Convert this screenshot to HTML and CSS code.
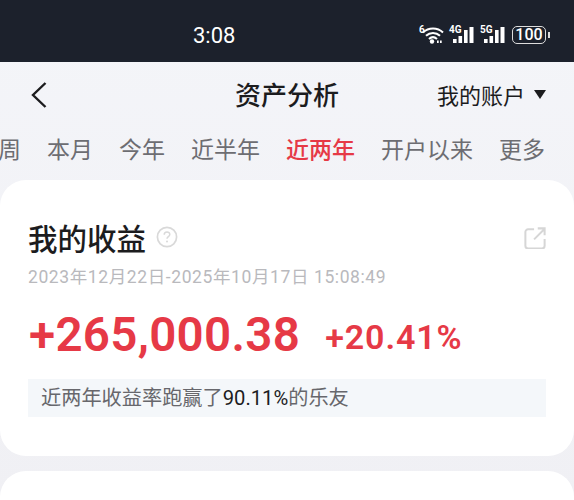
FILE: index.html
```html
<!DOCTYPE html>
<html lang="zh-CN">
<head>
    <meta charset="UTF-8">
    <meta name="viewport" content="width=device-width, initial-scale=1.0">
    <title>资产分析</title>
    <link rel="stylesheet" href="styles.css">
</head>
<body>
    <div class="status-bar">
        <span class="clock">3:08</span>
        <div class="status-icons">
            <span class="net-wifi">
                <span class="net-label">6</span>
                <svg width="22" height="18" viewBox="0 0 22 18">
                    <path d="M1 6.5C6.5 1.2 15.5 1.2 21 6.5M4 9.8C8 6 14 6 18 9.8M7 13C9.4 10.8 12.6 10.8 15 13" fill="none" stroke="#fff" stroke-width="2"/>
                    <circle cx="10" cy="15.5" r="2.2" fill="#fff"/>
                    <rect x="15" y="14.5" width="1.7" height="2.5" fill="#fff"/>
                    <rect x="18" y="14.5" width="1.7" height="2.5" fill="#fff"/>
                </svg>
            </span>
            <span class="net-cell">
                <span class="net-label">4G</span>
                <svg width="26" height="18" viewBox="0 0 26 18">
                    <rect x="4" y="13" width="3.6" height="4" fill="#fff"/>
                    <rect x="9.5" y="10" width="3.6" height="7" fill="#fff"/>
                    <rect x="15" y="4" width="3.6" height="13" fill="#fff"/>
                    <rect x="20.5" y="1" width="4" height="16" fill="#fff"/>
                </svg>
            </span>
            <span class="net-cell">
                <span class="net-label">5G</span>
                <svg width="26" height="18" viewBox="0 0 26 18">
                    <rect x="4" y="13" width="3.6" height="4" fill="#fff"/>
                    <rect x="9.5" y="10" width="3.6" height="7" fill="#fff"/>
                    <rect x="15" y="4" width="3.6" height="13" fill="#fff"/>
                    <rect x="20.5" y="1" width="4" height="16" fill="#fff"/>
                </svg>
            </span>
            <span class="battery">100</span>
            <span class="battery-tip"></span>
        </div>
    </div>

    <header class="nav">
        <svg class="back" width="18" height="28" viewBox="0 0 18 28">
            <path d="M15.5 2L3 14l12.5 12" fill="none" stroke="#1c1c1e" stroke-width="2.4"/>
        </svg>
        <h1>资产分析</h1>
        <div class="account">我的账户<span class="caret"></span></div>
    </header>

    <nav class="tabs">
        <span class="tab">周</span>
        <span class="tab">本月</span>
        <span class="tab">今年</span>
        <span class="tab">近半年</span>
        <span class="tab active">近两年</span>
        <span class="tab">开户以来</span>
        <span class="tab">更多</span>
    </nav>

    <main class="cards">
        <section class="card">
            <div class="card-head">
                <h2>我的收益</h2>
                <svg class="help" width="22" height="22" viewBox="0 0 22 22">
                    <circle cx="11" cy="11" r="9.6" fill="none" stroke="#d9d9d9" stroke-width="1.7"/>
                    <path d="M8.2 8.8c0-3.6 5.6-3.6 5.6-.2 0 2-2.8 2.2-2.8 4.2" fill="none" stroke="#d9d9d9" stroke-width="1.5"/>
                    <circle cx="11" cy="15.6" r="1" fill="#d9d9d9"/>
                </svg>
                <svg class="share" width="22" height="22" viewBox="0 0 24 24">
                    <path d="M11 2.5H4.5a3 3 0 0 0-3 3v15a3 3 0 0 0 3 3h15a3 3 0 0 0 3-3V13" fill="none" stroke="#d6d6d6" stroke-width="2.2"/>
                    <path d="M11 13.5L21.5 3M15 1.5h7.5V9" fill="none" stroke="#d6d6d6" stroke-width="2.2"/>
                </svg>
            </div>
            <p class="date">2023年12月22日-2025年10月17日 15:08:49</p>
            <div class="profit">
                <span class="amount">+265,000.38</span>
                <span class="rate">+20.41%</span>
            </div>
            <p class="beat">近两年收益率跑赢了<b>90.11%</b>的乐友</p>
        </section>
        <section class="card-next"></section>
    </main>
</body>
</html>
```

FILE: styles.css
```css
:root {
    --red: #e63946;
    --dark: #1c212c;
}

body, h1, h2, p { margin: 0; }
html, body { height: 500px; overflow: hidden; }
body {
    background: linear-gradient(to bottom, #f4f5f9, #f0f0f4);
    font-family: "Noto Sans CJK SC", "Noto Sans", sans-serif;
    color: #1c1c1e;
}

.status-bar {
    height: 62px;
    background: var(--dark);
    color: #fff;
    display: flex;
    align-items: center;
    padding-left: 193px;
    position: relative;
}

.clock {
    font-family: "Roboto", sans-serif;
    font-size: 22px;
    line-height: 26px;
    margin-top: 9px;
}

.status-icons {
    position: absolute;
    left: 419px;
    top: 26px;
    display: flex;
    align-items: center;
    gap: 5px;
}

.net-wifi, .net-cell { display: flex; position: relative; }
.net-wifi { padding-left: 3px; }
.net-cell svg { display: block; }
.net-label {
    position: absolute;
    left: 0;
    top: -1px;
    font-family: "Roboto", sans-serif;
    font-size: 10px;
    line-height: 10px;
    font-weight: 700;
}

.battery {
    width: 34px;
    height: 18px;
    margin-left: 1px;
    box-sizing: border-box;
    border: 1.5px solid #ddd;
    border-radius: 5px;
    font-family: "Roboto", sans-serif;
    font-size: 16px;
    line-height: 15px;
    font-weight: 500;
    text-align: center;
}

.battery-tip {
    width: 2px;
    height: 6px;
    background: #ddd;
    margin-left: -3px;
}

.nav {
    height: 66px;
    display: flex;
    align-items: center;
    justify-content: space-between;
    padding: 0 28px 0 30px;
    position: relative;
}

.nav h1 {
    position: absolute;
    left: 0;
    right: 0;
    text-align: center;
    font-size: 26px;
    line-height: 34px;
    font-weight: 500;
    margin-top: -2px;
}

.account {
    display: flex;
    align-items: center;
    font-size: 22px;
    line-height: 30px;
    margin-top: -3px;
}

.caret {
    width: 0;
    height: 0;
    margin-left: 9px;
    margin-top: 2px;
    border-left: 6.5px solid transparent;
    border-right: 6.5px solid transparent;
    border-top: 9px solid #1c1c1e;
}

.tabs {
    height: 52px;
    display: flex;
    align-items: flex-start;
    gap: 26px;
    margin-left: -2px;
    padding-top: 4px;
    box-sizing: border-box;
    white-space: nowrap;
    font-size: 23px;
    line-height: 32px;
    color: #6d6d72;
}

.tab.active { color: var(--red); font-weight: 500; }

.card {
    background: #fff;
    border-radius: 26px;
    padding: 38px 28px 39px 28px;
}

.card-next {
    margin-top: 15px;
    height: 29px;
    background: #fff;
    border-radius: 26px 26px 0 0;
}

.card-head {
    display: flex;
    align-items: center;
    height: 38px;
}

.card-head h2 {
    font-size: 29.5px;
    line-height: 38px;
    font-weight: 500;
}

.help { margin-left: 10px; }
.share { margin-left: auto; margin-top: 1px; }

.date {
    margin-top: 9px;
    font-family: "Roboto", "Noto Sans CJK SC", sans-serif;
    font-size: 17.5px;
    line-height: 24px;
    letter-spacing: 0.6px;
    color: #b9b9bd;
}

.profit {
    margin-top: 19px;
    margin-left: 1px;
    display: flex;
    align-items: flex-start;
    gap: 25px;
    color: var(--red);
    font-family: "Roboto", sans-serif;
    font-weight: 600;
}

.amount { font-size: 47.5px; line-height: 54px; letter-spacing: 0.3px; }
.rate { font-size: 34px; line-height: 54px; letter-spacing: 0.9px; margin-top: 2px; }

.beat {
    margin-top: 15px;
    height: 38px;
    padding-left: 13px;
    background: #f4f7fa;
    font-size: 20.2px;
    line-height: 36px;
    color: #67676c;
}

.beat b {
    font-family: "Roboto", sans-serif;
    font-weight: 400;
    color: #1c1c1e;
}
```
